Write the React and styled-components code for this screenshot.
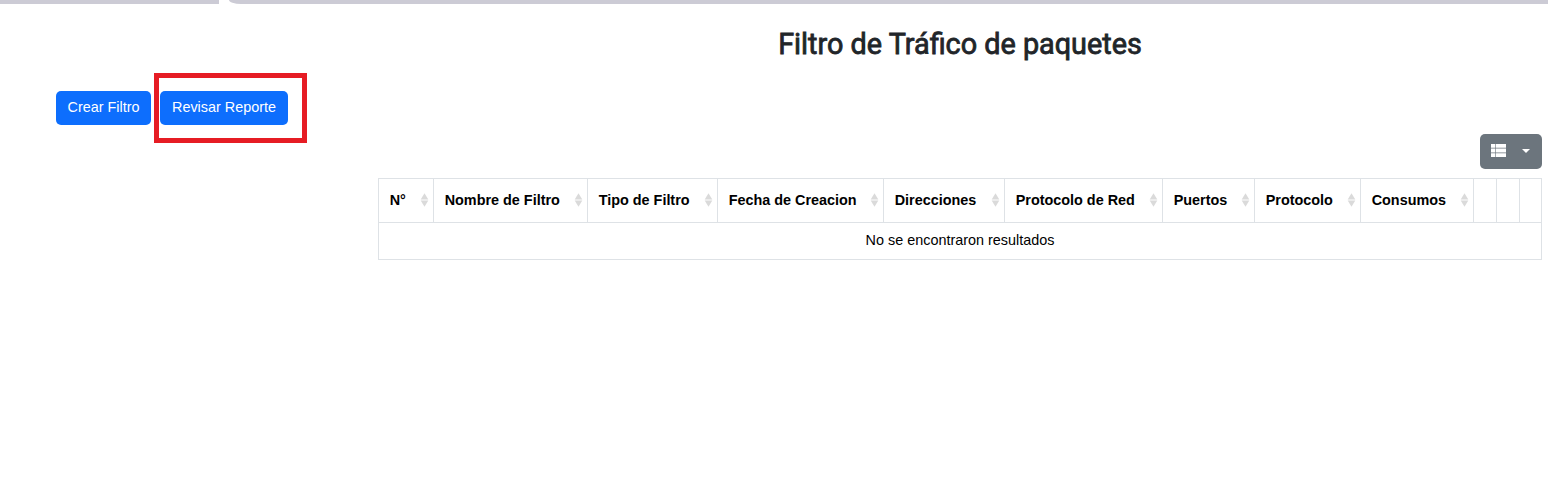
import React from "react";
import styled, { createGlobalStyle } from "styled-components";

const GlobalStyle = createGlobalStyle`
  * { box-sizing: border-box; }
  body {
    margin: 0;
    background: #fff;
    color: #000;
    font-family: "Liberation Sans", Arial, sans-serif;
    font-size: 14.4px;
  }
`;

const Page = styled.div`
  min-height: 490px;
  overflow: hidden;
`;

const TopStrip = styled.div`
  display: flex;
  justify-content: space-between;
  height: 4px;
`;

const SidebarEdge = styled.div`
  width: 219px;
  background: #cccbd5;
`;

const HeaderEdge = styled.div`
  width: 1319px;
  background: #cccbd5;
  border-bottom-left-radius: 12px 4px;
`;

const Content = styled.main`
  margin: 0 6px 0 378px;
`;

const Title = styled.h2`
  margin: 22px 0 0;
  height: 37px;
  text-align: center;
  white-space: nowrap;
  font: 400 28.8px/36px Roboto, sans-serif;
  -webkit-text-stroke: 0.8px #212529;
  color: #212529;
`;

const Actions = styled.div`
  display: flex;
  gap: 9px;
  margin: 28px 0 0 56px;
`;

const Button = styled.button`
  height: 34px;
  width: ${(p) => p.$width}px;
  padding: 0 0 2px;
  border: 0;
  border-radius: 5px;
  background: #0d6efd;
  color: #fff;
  font: inherit;
  white-space: nowrap;
`;

const Highlighted = styled.div`
  position: relative;
`;

const HighlightFrame = styled.div`
  position: absolute;
  left: -6px;
  top: -18px;
  width: 153px;
  height: 70px;
  border: 5px solid #e61c24;
  pointer-events: none;
`;

const Toolbar = styled.div`
  display: flex;
  justify-content: flex-end;
  margin-top: 9px;
`;

const ColumnsButton = styled.button`
  display: flex;
  align-items: center;
  gap: 16px;
  width: 62px;
  height: 35px;
  padding: 0 0 2px 11px;
  border: 0;
  border-radius: 5px;
  background: #6c757d;
`;

const Table = styled.div`
  margin-top: 9px;
  border: 1px solid #dee2e6;
  border-left: 0;
`;

const HeadRow = styled.div`
  display: grid;
  grid-template-columns: 55px 154px 130px 166px 121px 158px 92px 106px 113px 23px 23px 22px;
  height: 43px;
`;

const HeadCell = styled.div`
  display: flex;
  align-items: center;
  justify-content: space-between;
  padding: 0 4px 1px 10.7px;
  border-left: 1px solid #dee2e6;
  font-weight: 700;
  white-space: nowrap;
`;

const EmptyRow = styled.div`
  height: 37px;
  border-top: 1px solid #dee2e6;
  border-left: 1px solid #dee2e6;
  text-align: center;
  line-height: 35px;
`;

const SortIcon = () => (
  <svg width="9" height="14" viewBox="0 0 9 14" fill="#dadada">
    <path d="M4.5 0.3 8.3 6.4H0.7Z" />
    <path d="M4.5 13.7 8.3 7.6H0.7Z" />
  </svg>
);

const ListIcon = () => (
  <svg width="15" height="13" viewBox="0 0 15 13" fill="#fff">
    <path d="M0 0h4.2v3.7H0zM4.8 0H15v3.7H4.8zM0 4.5h4.2v4H0zM4.8 4.5H15v4H4.8zM0 9.3h4.2V13H0zM4.8 9.3H15V13H4.8z" />
  </svg>
);

const CaretIcon = () => (
  <svg width="8" height="4" viewBox="0 0 8 4" fill="#fff">
    <path d="M0 0h8L4 4z" />
  </svg>
);

const columns = [
  "N°",
  "Nombre de Filtro",
  "Tipo de Filtro",
  "Fecha de Creacion",
  "Direcciones",
  "Protocolo de Red",
  "Puertos",
  "Protocolo",
  "Consumos",
  "",
  "",
  "",
];

export default function App() {
  return (
    <Page>
      <GlobalStyle />
      <TopStrip>
        <SidebarEdge />
        <HeaderEdge />
      </TopStrip>
      <Content>
        <Title>Filtro de Tráfico de paquetes</Title>
      </Content>
      <Actions>
        <Button $width={95}>Crear Filtro</Button>
        <Highlighted>
          <Button $width={128}>Revisar Reporte</Button>
          <HighlightFrame />
        </Highlighted>
      </Actions>
      <Content>
        <Toolbar>
          <ColumnsButton aria-label="Columnas">
            <ListIcon />
            <CaretIcon />
          </ColumnsButton>
        </Toolbar>
        <Table>
          <HeadRow>
            {columns.map((label, i) => (
              <HeadCell key={i}>
                {label}
                {label && <SortIcon />}
              </HeadCell>
            ))}
          </HeadRow>
          <EmptyRow>No se encontraron resultados</EmptyRow>
        </Table>
      </Content>
    </Page>
  );
}
